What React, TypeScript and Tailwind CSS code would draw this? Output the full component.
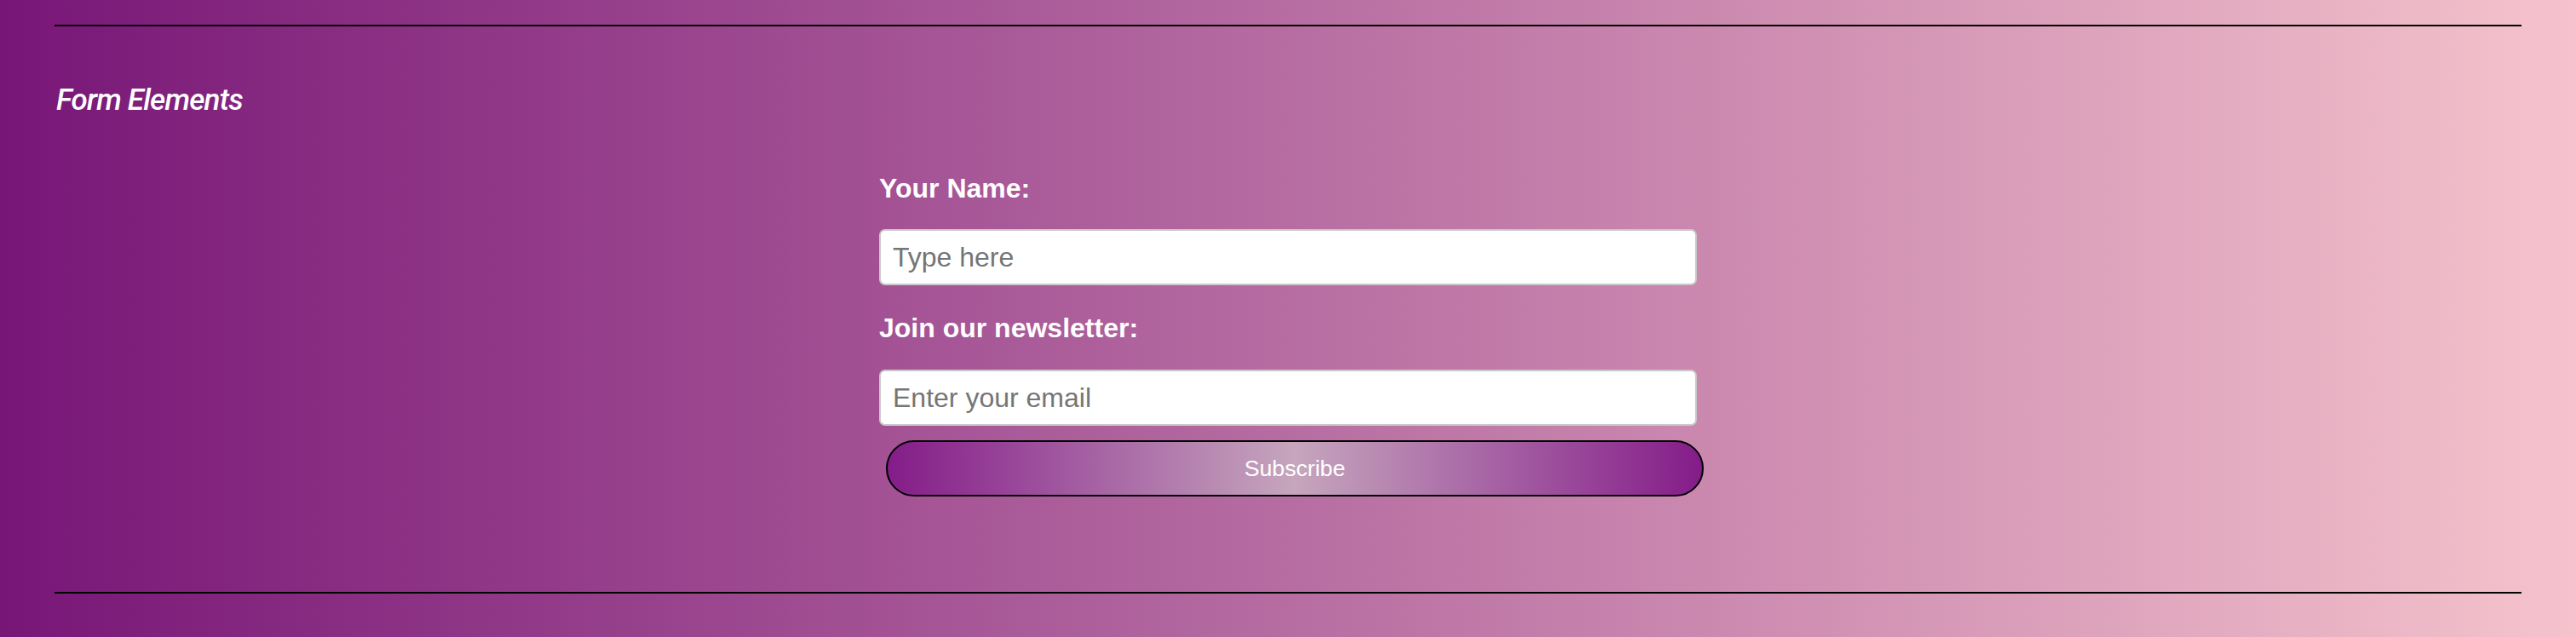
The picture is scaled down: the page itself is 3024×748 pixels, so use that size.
import React from "react";

export default function App() {
  return (
    <div className="w-full h-[748px] overflow-hidden bg-[linear-gradient(to_right,#781677,#f5c3cc)] font-['Liberation_Sans',Arial,sans-serif]">
      <div className="px-[64px] pt-[29px]">
        <hr className="border-0 border-t-2 border-black" />
        <h2 className="mt-[66px] pl-[2px] text-[35px] leading-[41px] tracking-[-0.8px] italic font-medium text-white font-['Roboto',sans-serif]">
          Form Elements
        </h2>
        <form className="w-[960px] mx-auto mt-[65px] flex flex-col" onSubmit={(e) => e.preventDefault()}>
          <label className="text-[32px] leading-[36px] font-bold text-white">Your Name:</label>
          <input
            type="text"
            placeholder="Type here"
            className="mt-[30px] h-[66px] w-full bg-white border-2 border-[#c8c8c8] rounded-[7px] px-[14px] text-[32px] text-black placeholder:text-[#757575] outline-none"
          />
          <label className="mt-[32px] text-[32px] leading-[36px] font-bold text-white">Join our newsletter:</label>
          <input
            type="email"
            placeholder="Enter your email"
            className="mt-[31px] h-[66px] w-full bg-white border-2 border-[#c8c8c8] rounded-[7px] px-[14px] text-[32px] text-black placeholder:text-[#757575] outline-none"
          />
          <button
            type="submit"
            className="mt-[17px] ml-[8px] h-[66px] w-full rounded-full border-2 border-black bg-[linear-gradient(to_right,#841c89,#c6a6bd,#841c89)] text-white text-[26.67px] leading-none"
          >
            Subscribe
          </button>
        </form>
        <hr className="mt-[112px] border-0 border-t-2 border-black" />
      </div>
    </div>
  );
}
